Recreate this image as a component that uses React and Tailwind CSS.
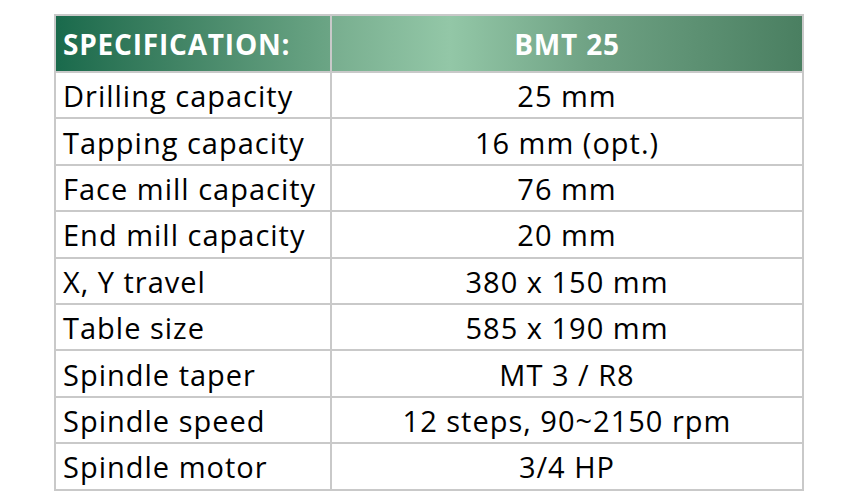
const rows = [
  ['Drilling capacity', '25 mm'],
  ['Tapping capacity', '16 mm (opt.)'],
  ['Face mill capacity', '76 mm'],
  ['End mill capacity', '20 mm'],
  ['X, Y travel', '380 x 150 mm'],
  ['Table size', '585 x 190 mm'],
  ['Spindle taper', 'MT 3 / R8'],
  ['Spindle speed', '12 steps, 90~2150 rpm'],
  ['Spindle motor', '3/4 HP'],
];

export default function App() {
  return (
    <div className="w-[850px] h-[500px] bg-white pt-[14px] pl-[54px]" style={{ fontFamily: '"Open Sans", "Liberation Sans", sans-serif' }}>
      <table className="w-[750px] border-collapse border-2 border-[#c9c9c9] text-[29px] tracking-[1px] leading-none text-black">
        <thead>
          <tr className="h-[57px]">
            <th className="w-[276px] border-2 border-[#c9c9c9] bg-gradient-to-r from-[#196a4c] to-[#6ba585] pl-[7px] text-left text-[28px] tracking-[0.8px] font-bold text-white">
              SPECIFICATION:
            </th>
            <th className="border-2 border-[#c9c9c9] bg-[linear-gradient(to_right,#78ae8f_0%,#93c7a7_25%,#6fa284_55%,#4a7f61_100%)] text-center text-[28px] tracking-[0.8px] font-bold text-white">
              BMT 25
            </th>
          </tr>
        </thead>
        <tbody>
          {rows.map(([label, value]) => (
            <tr key={label} className="h-[46.4px]">
              <td className="border-2 border-[#c9c9c9] pl-[7px] pt-[1px]">{label}</td>
              <td className="border-2 border-[#c9c9c9] pt-[1px] text-center">{value}</td>
            </tr>
          ))}
        </tbody>
      </table>
    </div>
  );
}
